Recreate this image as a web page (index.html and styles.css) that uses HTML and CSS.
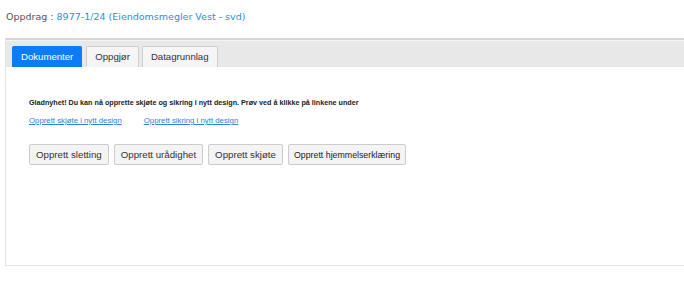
FILE: index.html
```html
<!DOCTYPE html>
<html>
<head>
<meta charset="utf-8">
<link rel="stylesheet" href="styles.css">
</head>
<body>
<div class="header">Oppdrag : <span class="ref">8977-1/24 (Eiendomsmegler Vest - svd)</span></div>
<div class="panel">
  <div class="tabbar">
    <div class="tab active">Dokumenter</div>
    <div class="tab">Oppgjør</div>
    <div class="tab">Datagrunnlag</div>
  </div>
  <div class="content">
    <p class="news">Gladnyhet! Du kan nå opprette skjøte og sikring i nytt design. Prøv ved å klikke på linkene under</p>
    <div class="links">
      <a href="#">Opprett skjøte i nytt design</a>
      <a href="#">Opprett sikring i nytt design</a>
    </div>
    <div class="buttons">
      <button class="btn">Opprett sletting</button>
      <button class="btn">Opprett urådighet</button>
      <button class="btn">Opprett skjøte</button>
      <button class="btn small">Opprett hjemmelserklæring</button>
    </div>
  </div>
</div>
</body>
</html>
```
FILE: styles.css
```css
html, body { margin: 0; padding: 0; background: #fff; }
body { font-family: "Liberation Sans", Arial, sans-serif; }
.header {
  font-family: "DejaVu Sans", Verdana, sans-serif;
  font-size: 9.5px;
  color: #555;
  padding: 11px 0 0 6px;
  height: 38px;
  box-sizing: border-box;
}
.header .ref { color: #2a8ee8; }
.panel {
  margin-left: 5px;
  border-top: 2px solid #d6d6d6;
  border-left: 1px solid #e2e2e2;
  border-bottom: 1px solid #e6e6e6;
  height: 228px;
  box-sizing: border-box;
}
.tabbar {
  background: #e8e8e8;
  height: 26px;
  display: flex;
  align-items: flex-end;
  gap: 3px;
  padding-left: 6px;
  border-top: 1px solid #f4f4f4;
}
.tab {
  height: 21px;
  box-sizing: border-box;
  padding: 0 8px;
  font-size: 9.6px;
  line-height: 20px;
  color: #333;
  background: #f5f5f5;
  border: 1px solid #cfcfcf;
  border-bottom: none;
  border-radius: 2px 2px 0 0;
}
.tab.active {
  background: #0b7cf6;
  border-color: #0b7cf6;
  color: #fff;
  margin-right: 1px;
}
.content { padding: 31px 0 0 23px; }
.news {
  margin: 0;
  font-size: 7.2px;
  font-weight: bold;
  color: #222;
}
.links {
  display: flex;
  gap: 22px;
  margin-top: 9px;
}
.links a {
  font-size: 7.8px;
  color: #2f7fe0;
  text-decoration: underline;
}
.buttons {
  display: flex;
  gap: 5px;
  margin-top: 19px;
}
.btn {
  font-family: "Liberation Sans", Arial, sans-serif;
  font-size: 9.7px;
  color: #333;
  background: #f4f4f4;
  border: 1px solid #cccccc;
  border-radius: 2px;
  height: 21px;
  padding: 0 6px;
  margin: 0;
}
.btn.small { font-size: 8.8px; padding: 0 5px; color: #222; }
```
